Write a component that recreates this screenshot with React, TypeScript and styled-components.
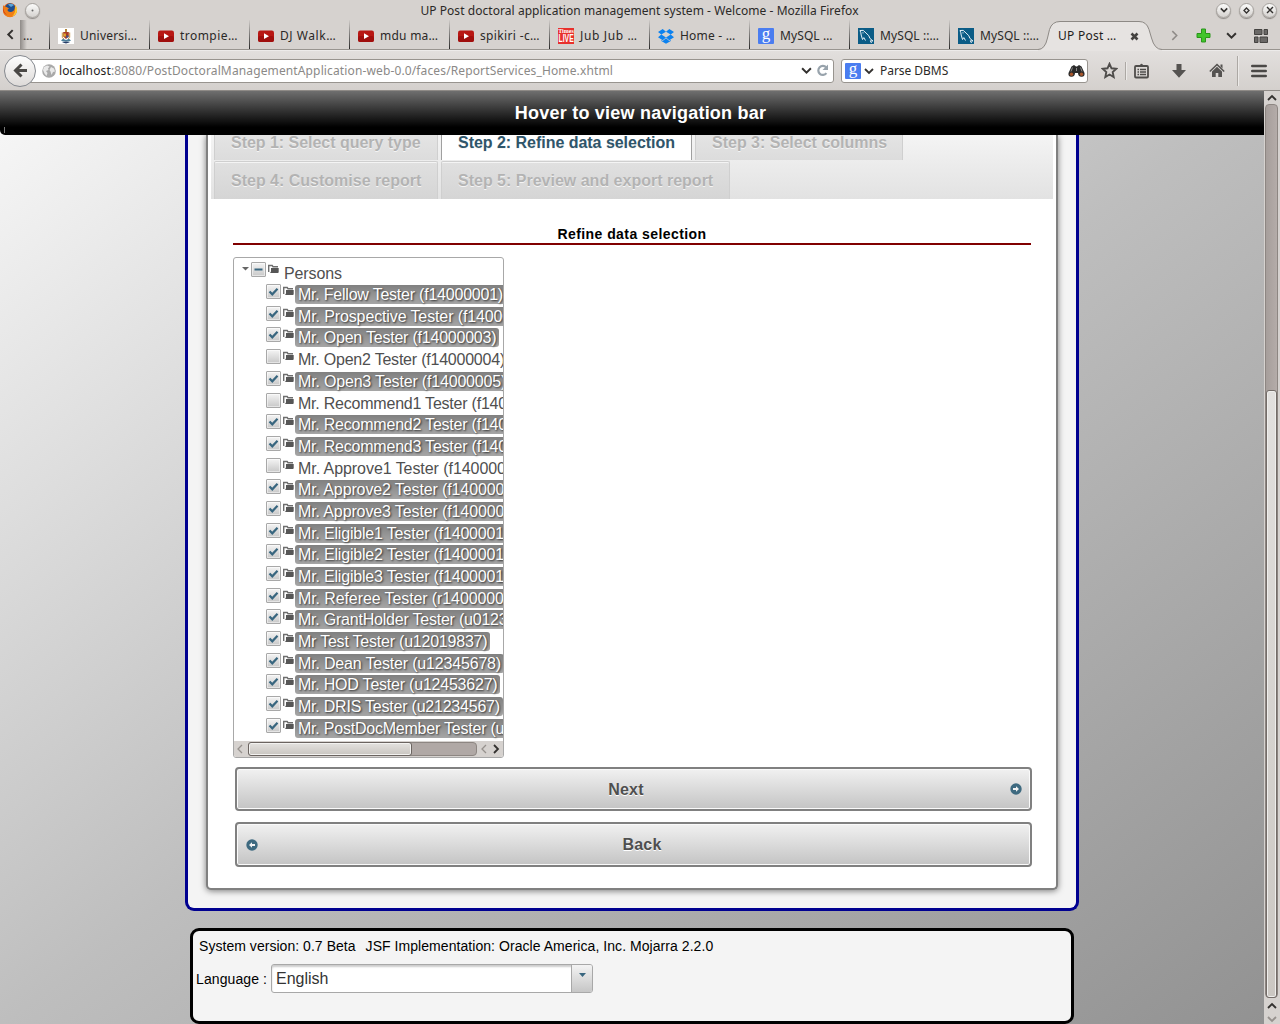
import React from "react";
import styled, { createGlobalStyle, css } from "styled-components";

const ui = `"Noto Sans", "Open Sans", sans-serif`;
const sans = `"Liberation Sans", Arial, sans-serif`;

const Global = createGlobalStyle`
  html, body { margin: 0; padding: 0; }
  body { overflow: hidden; }
  * { box-sizing: border-box; }
  svg { flex: none; }
`;

const Window = styled.div`
  width: 1280px; height: 1024px; overflow: hidden;
  display: flex; flex-direction: column;
  background: #d6d2cf; color: #2b2927; font: 12px/16px ${ui};
`;
const Text = styled.span<{ $ls?: number }>`
  letter-spacing: ${(p) => p.$ls ?? 0}px; white-space: pre;
`;

/* title bar */
const TitleBar = styled.header`
  flex: none; height: 20px; display: flex; align-items: center; justify-content: space-between;
  padding: 0 3px 0 2px;
`;
const TitleSide = styled.div`display: flex; gap: 8px; width: 66px; justify-content: flex-end;`;
const TitleLeft = styled.div`display: flex; gap: 7px; width: 66px; align-items: center;`;
const TitleText = styled(Text)`padding-top: 2px;`;
const Knob = styled.span`
  width: 15px; height: 15px; border-radius: 50%; display: grid; place-items: center;
  background: linear-gradient(#fbfbfa, #d5d2cf); border: 1px solid #a6a29e;
  box-shadow: 0 1px 1px #8d8985;
`;

/* tab strip */
const TabStrip = styled.nav`
  flex: none; height: 30px; display: flex; border-bottom: 1px solid #98948f;
`;
const ScrollTabs = styled.div`
  flex: none; width: 20px; height: 29px; display: grid; place-items: center;
`;
const PartialTab = styled.div`
  flex: none; width: 30px; height: 29px; padding: 8px 0 0 3px; background: linear-gradient(90deg, #8e8a87, #d6d2cf 7px);
  border-right: 1px solid #2f2d2b;
  border-image: linear-gradient(#d6d2cf, #222) 1;
`;
const BrowserTab = styled.div<{ $last?: boolean }>`
  flex: none; width: 100px; height: 29px; display: flex; align-items: center; gap: 6px; padding: 2px 0 0 8px;
  border-right: 1px solid #2f2d2b;
  border-image: linear-gradient(#d6d2cf, #222) 1;
  ${(p) => p.$last && css`width: 91px; border-image: none; border-right: 0;`}
`;
const ActiveTab = styled.div`
  flex: none; width: 124px; height: 30px; position: relative; display: flex; align-items: center;
  padding: 2px 0 0 17px; color: #1f1d1b;
`;
const ActiveShape = styled.svg`position: absolute; left: 0; top: 0; z-index: 0; overflow: visible;`;
const Above = styled.div`position: relative; display: flex; align-items: center; gap: 13px;`;
const TabTools = styled.div`flex: 1; display: flex; align-items: center; padding: 2px 0 0 0; height: 29px;`;
const ToolSlot = styled.span<{ $w: number }>`
  flex: none; width: ${(p) => p.$w}px; display: flex; justify-content: center; align-items: center;
`;

/* toolbar */
const Toolbar = styled.div`
  flex: none; height: 41px; display: flex; align-items: center; border-bottom: 1px solid #8e8a86;
  border-top: 1px solid #edebea;
  background: linear-gradient(#e2dfdd, #d4d0cd);
`;
const BackButton = styled.div`
  flex: none; width: 32px; height: 32px; margin: 0 -17px 0 4px; border-radius: 50%; z-index: 1;
  display: grid; place-items: center; border: 1px solid #85898f;
  background: linear-gradient(#fdfdfd, #dddad8);
`;
const UrlField = styled.div`
  flex: none; width: 815px; height: 24px; border: 1px solid #98948f; border-radius: 3px; background: #fff;
  display: flex; align-items: center; padding: 0 2px 0 18px; color: #8b8987;
  b { font-weight: 400; color: #1e1c1b; }
`;
const Spacer = styled.span`flex: 1;`;
const SearchField = styled.div`
  flex: none; width: 247px; height: 24px; margin-left: 7px; border: 1px solid #98948f; border-radius: 3px;
  background: #fff; display: flex; align-items: center; padding: 0 2px 0 3px; gap: 3px;
`;
const Divider = styled.span<{ $h: number }>`
  flex: none; width: 1px; height: ${(p) => p.$h}px; background: #aca8a4; box-shadow: 1px 0 #eceae8;
`;

/* page */
const Body = styled.div`flex: 1; display: flex; min-height: 0;`;
const Page = styled.main`
  width: 1264px; overflow: hidden; display: flex; flex-direction: column;
  font-family: ${sans}; color: #000;
  background: linear-gradient(to bottom right, #f8f8f8 0%, #bebebe 50%, #929292 100%);
`;
const NavBar = styled.div`
  flex: none; height: 44px; border-radius: 0 0 0 5px;
  background: linear-gradient(#777, #777) 4px 36px / 1px 6px no-repeat, linear-gradient(#6f6f6f, #000 82%);
  color: #fff; font: bold 18px/44px ${sans}; text-align: center; padding-left: 17px;
`;
const Outer = styled.section`
  flex: none; width: 894px; height: 776px; margin-left: 185px; border: 3px solid #000090; border-top: 0;
  border-radius: 0 0 9px 9px; background: #f4f4f4; padding: 0 18px;
`;
const Inner = styled.div`
  height: 755px; width: 852px; background: #fff; border: 2px solid #808080; border-top: 0;
  border-radius: 0 0 5px 5px; box-shadow: 0 1px 6px rgba(0,0,0,.5);
  padding: 0 3px; display: flex; flex-direction: column;
`;
const Steps = styled.div`
  width: 842px; height: 64px; padding-left: 3px; background: linear-gradient(#f4f4f4, #e2e2e2);
  display: flex; flex-wrap: wrap; align-content: flex-start; column-gap: 3px;
`;
const Step = styled.div<{ $w: number; $row: 1 | 2; $active?: boolean }>`
  width: ${(p) => p.$w}px; height: ${(p) => (p.$row === 1 ? 25 : 38)}px;
  padding-left: 16px; white-space: nowrap;
  font: bold 16px/${(p) => (p.$row === 1 ? 16 : 37)}px ${sans};
  color: #b3b3b3; text-shadow: 0 1px 0 #f5f5f5;
  border: 1px solid #cfcfcf; border-bottom: 0;
  ${(p) => p.$row === 1
    ? css`border-top: 0; background: linear-gradient(#e4e4e4, #dcdcdc);`
    : css`background: linear-gradient(#e0e0e0, #d5d5d5); box-shadow: inset 0 1px #f4f4f4; border-radius: 2px 2px 0 0;`}
  ${(p) => p.$active && css`color: #2f556a; background: #fff; border-color: #a0a0a0;`}
`;
const Break = styled.span`flex-basis: 100%; height: 1px;`;
const Content = styled.div`padding: 25px 22px 0; display: flex; flex-direction: column;`;
const Heading = styled.h2`
  margin: 0; height: 21px; width: 798px; border-bottom: 2px solid #800000;
  font: bold 14px/20px ${sans}; text-align: center;
`;
const Tree = styled.div`
  width: 271px; height: 501px; margin-top: 12px; border: 1px solid #a8a8a8; border-radius: 3px;
  display: flex; flex-direction: column; overflow: hidden; color: #4f4f4f;
`;
const TreeRows = styled.div`flex: 1; padding-top: 4.4px; overflow: hidden;`;
const TreeRow = styled.div<{ $root?: boolean }>`
  height: 21.7px; display: flex; align-items: flex-start; padding-left: ${(p) => (p.$root ? 7 : 32)}px;
`;
const Check = styled.span`
  flex: none; width: 15px; height: 15px; border: 1px solid #a8a8a8; border-radius: 1px; margin-right: 2px;
  background: linear-gradient(#f4f4f4, #c8c8c8); display: grid; place-items: center;
  box-shadow: inset 0 0 0 1px rgba(255,255,255,.5);
`;
const Label = styled.span<{ $on?: boolean; $root?: boolean }>`
  flex: none; height: 19px; margin: ${(p) => (p.$root ? "2px 0 0 1px" : "1px 0 0")}; padding: 0 3px; border-radius: 3px;
  font: 16px/20px ${sans}; white-space: nowrap;
  ${(p) => p.$on && css`
    color: #fff; background: linear-gradient(#808080, #a6a6a6); text-shadow: 1px 1px 2px rgba(0,0,0,.7);
  `}
`;
const HScroll = styled.div`
  flex: none; height: 16px; background: #d6d2cf; display: flex; align-items: center; gap: 2px; padding: 0 0 0 1px;
`;
const HTrack = styled.div`
  flex: none; width: 229px; height: 14px; margin-left: 1px; border: 1px solid #8d8682; border-radius: 4px; background: #b0a8a5;
`;
const HThumb = styled.div`
  width: 164px; height: 14px; margin: -1px 0 0 -1px; border: 1px solid #6b6460; border-radius: 3px;
  background: linear-gradient(#e4e2df, #c9c5c0); box-shadow: inset 0 0 0 1px #f3f2f0;
`;
const BigButton = styled.div<{ $h: number; $mt: number }>`
  width: 797px; height: ${(p) => p.$h}px; margin: ${(p) => p.$mt}px 0 0 2px; border: 2px solid #808080; border-radius: 4px;
  background: linear-gradient(#f1f1f1, #c4c4c4); box-shadow: inset 0 0 0 1px #fafafa;
  display: flex; align-items: center; gap: 4px; padding: 0 8px 0 9px; color: #4f4f4f;
  font: bold 16px/20px ${sans}; text-shadow: 0 1px 0 #fff;
`;
const Grow = styled.span`flex: 1; text-align: center; letter-spacing: .2px; padding-top: 1px;`;
const Footer = styled.footer`
  flex: none; width: 884px; height: 96px; margin: 17px 0 0 190px; border: 3px solid #000; border-radius: 9px;
  background: #f4f4f4; font: 14px/16px ${sans};
`;
const FooterLine = styled.div`display: flex; gap: 10px; padding: 7px 0 0 6px; height: 33px;`;
const LangLine = styled.div`display: flex; align-items: center; padding-left: 3px; height: 29px;`;
const Select = styled.div`
  width: 322px; height: 29px; border: 1px solid #a8a8a8; border-radius: 3px; display: flex; background: #fff;
  box-shadow: inset 0 2px 2px #ccc; font: 16px/27px ${sans}; color: #333; padding-left: 4px; overflow: hidden;
`;
const SelectArrow = styled.span`
  width: 21px; border-left: 1px solid #a8a8a8; background: linear-gradient(#f3f3f3, #c6c6c6);
  display: flex; justify-content: center; padding-top: 8px;
`;

/* vertical scroll bar */
const VScroll = styled.aside`
  width: 16px; background: #d6d2cf; display: flex; flex-direction: column; align-items: center;
`;
const VTrack = styled.div`
  width: 13px; height: 894px; margin-right: 1px; border: 1px solid #8d8682; border-radius: 4px;
  background: linear-gradient(90deg, #a69e9b, #b4aca9);
  display: flex; flex-direction: column; justify-content: flex-end;
`;
const VThumb = styled.div`
  height: 608px; margin: 0 0 -1px; border: 1px solid #736c68; border-radius: 3px;
  background: linear-gradient(#e2e0de, #cbc7c2); box-shadow: inset 0 0 0 1px #efeeec;
`;
const ArrowSlot = styled.div<{ $h: number }>`
  height: ${(p) => p.$h}px; display: grid; place-items: center;
`;

const Chevron = ({ dir, c = "#33312f", s = 10, w = 1.8 }: { dir: "u" | "d" | "l" | "r"; c?: string; s?: number; w?: number }) => {
  const d = { u: "M1 7 5 3 9 7", d: "M1 3 5 7 9 3", l: "M7 1 3 5 7 9", r: "M3 1 7 5 3 9" }[dir];
  return <svg width={s} height={s} viewBox="0 0 10 10"><path d={d} fill="none" stroke={c} strokeWidth={w} /></svg>;
};

const Firefox = () => (
  <svg width="16" height="16" viewBox="0 0 16 16">
    <circle cx="8" cy="8" r="7" fill="#e8661b" />
    <circle cx="8.2" cy="6.4" r="5.2" fill="#1f4f8f" />
    <path d="M6 2.5Q9 .8 12 3L9 5Z" fill="#5aa4d8" />
    <path d="M1 3Q2 5 4.5 5L7 6.5 5.3 8Q6.5 11 10 9.7 13 8.5 12.8 5 15 7 14.5 10 13 15 8 15.2 1 14.5.9 8Z" fill="#f07d16" />
    <path d="M13 3Q16 6.5 14.6 10.5 13 14 10 14.5 13.5 11 13.2 7Z" fill="#fcc92c" />
    <path d="M1.5 4Q.8 10 5 13 2 12 1 8Z" fill="#c5301a" />
  </svg>
);
const YouTube = () => (
  <svg width="16" height="16" viewBox="0 0 16 16">
    <rect y="2.5" width="16" height="11.5" rx="2.2" fill="#b81713" />
    <rect y="8" width="16" height="6" rx="2.2" fill="#a00f0d" />
    <path d="M6 5.3 11 8.2 6 11Z" fill="#fff" />
  </svg>
);
const Crest = () => (
  <svg width="16" height="16" viewBox="0 0 16 16">
    <rect width="16" height="16" fill="#fff" />
    <path d="M7 1h2v3H7z" fill="#b3863a" /><path d="M5.2 4h5.6v4.5L8 11 5.2 8.500Z" fill="#a63a26" />
    <path d="M5.500 5.500h2.400v3H5.500z" fill="#e0a92e" /><path d="M8.200 7.500h2.300v2H8.200z" fill="#33548d" />
    <path d="M4.300 4.500v5L6 11M11.700 4.500v5L10 11" fill="none" stroke="#c9963f" />
    <path d="M3 12.500 5 10.800 8 12 11 10.800 13 12.500 11 13.500H5Z" fill="#4d7f9a" />
    <path d="M4 14.200 8 13.500 12 14.200 8 15.500Z" fill="#273e68" />
  </svg>
);
const TimesIcon = styled.span`
  flex: none; width: 16px; height: 16px; background: #e8302c; color: #fff; display: flex; flex-direction: column;
  align-items: center; overflow: hidden;
  i { font: bold 6px/6px "Liberation Serif", serif; }
  b { font: bold 10px/10px "Liberation Sans", sans-serif; transform: scaleX(.68); }
`;
const Dropbox = () => (
  <svg width="16" height="16" viewBox="0 0 16 16" fill="#0d82ef">
    <path d="M4.700 1 8 3.700 3.300 6.600 0 4ZM11.300 1 16 4 12.700 6.600 8 3.700ZM0 9.200 3.300 6.600 8 9.500 4.700 12.200ZM16 9.200 12.700 6.600 8 9.500 11.300 12.200ZM8 10.200 11.300 12.900 12.800 12V13L8 15.800 3.300 13V12L4.700 12.900Z" />
  </svg>
);
const GoogleIcon = styled.span`
  flex: none; width: 16px; height: 16px; background: #4a7df0; color: #fff; border-radius: 1px;
  font: 17px/11px "Liberation Serif", serif; text-align: center; overflow: hidden;
`;
const MySql = () => (
  <svg width="16" height="16" viewBox="0 0 16 16">
    <rect width="16" height="16" fill="#0b5c86" />
    <path d="M2 2.500Q5.500 1 8 5 11.500 7.500 12 10.500L15 13 12.300 12.800 13.500 15M2 2.500Q3 4.500 3.200 7L4.500 11.500 5.800 9.600 7.500 12.500" fill="none" stroke="#e7f1f6" strokeWidth="1" />
    <circle cx="5" cy="4.800" r=".6" fill="#fff" />
  </svg>
);
const Globe = () => (
  <svg width="14" height="14" viewBox="0 0 14 14">
    <circle cx="7" cy="7" r="6.800" fill="#a9a9a9" />
    <path d="M2 3 5 1.500 7.500 2.500 6 4.500 6.500 6 4 7 5.500 9 4.500 12 2.500 9.500 1 6ZM9 3 12 4.500 13 7.500 11 8 9.500 11 8.500 7.500 7.500 6Z" fill="#e9e9e9" />
  </svg>
);
const Binoculars = () => (
  <svg width="17" height="14" viewBox="0 0 17 14">
    <path d="M3.500 2.500 6 1 8 2.500H9L11 1 13.500 2.500 16.500 9Q17 13 13.500 12.800 10 12.500 10 9H7Q7 12.500 3.500 12.800 0 13 .5 9Z" fill="#2a2a2a" />
    <path d="M4.500 3.500 3 7.500M12.500 3.500 14 7.500M8.500 4v3" stroke="#8a8a8a" />
    <circle cx="3.500" cy="10.200" r="1.700" fill="#a8562b" /><circle cx="13.500" cy="10.200" r="1.700" fill="#a8562b" />
  </svg>
);
const Reload = () => (
  <svg width="13" height="13" viewBox="0 0 13 13">
    <path d="M10.200 3.500A4.500 4.500 0 1 0 10.400 9.200" fill="none" stroke="#98a3ac" strokeWidth="2.200" />
    <path d="M12 .5V6H6.500Z" fill="#98a3ac" />
  </svg>
);
const Star = () => (
  <svg width="17" height="17" viewBox="0 0 17 17">
    <path d="M8.500 1.800 10.500 6.300 15.300 6.800 11.700 10.100 12.700 15 8.500 12.500 4.300 15 5.300 10.100 1.700 6.800 6.500 6.300Z" fill="none" stroke="#4f4d4b" strokeWidth="1.900" />
  </svg>
);
const Clipboard = () => (
  <svg width="15" height="16" viewBox="0 0 15 16">
    <rect x="1" y="3" width="13" height="11.500" rx="1" fill="none" stroke="#4f4d4b" strokeWidth="1.800" />
    <path d="M4 3.500V2H6Q7.500-.5 9 2H11V3.500Z" fill="#4f4d4b" />
    <path d="M3.500 6.500H5M6 6.500h6M3.500 9H5M6 9h6M3.500 11.500H5M6 11.500h6" stroke="#4f4d4b" strokeWidth="1.400" />
  </svg>
);
const Download = () => (
  <svg width="14" height="14" viewBox="0 0 14 14"><path d="M4.500 0h5v6H14L7 13.800 0 6h4.500Z" fill="#555351" /></svg>
);
const Home = () => (
  <svg width="16" height="15" viewBox="0 0 16 15">
    <path d="M.8 8.500 8 1.500 15.200 8.500" fill="none" stroke="#555351" strokeWidth="1.600" />
    <path d="M3 8.500 8 3.800 13 8.500V14H9.300V10H6.700V14H3ZM11.500 1.500h2v4l-2-2Z" fill="#555351" />
  </svg>
);
const Menu = () => (
  <svg width="16" height="14" viewBox="0 0 16 14"><path d="M1.300 2H14.700M1.300 7H14.700M1.300 12H14.700" stroke="#4a4846" strokeWidth="2.600" strokeLinecap="round" /></svg>
);
const Panorama = () => (
  <svg width="14" height="14" viewBox="0 0 14 14" fill="#6a6866" stroke="#454341">
    <path d="M.5.5h7.500v5H.5zM10 .5h3.500v5H10zM.5 8h3.500v5.500H.5zM6 8h7.500v5.500H6z" />
  </svg>
);
const Folder = () => (
  <svg width="12" height="15" viewBox="0 0 12 15">
    <path d="M.7 10V3.500H4.200L5 4.700H10" fill="none" stroke="#6e6e6e" strokeWidth="1.400" />
    <path d="M3 6H10.700V10Q10.700 11 9.700 11H1.700Q3 10.500 3 9Z" fill="#565656" />
  </svg>
);
const Tick = () => (
  <svg width="11" height="11" viewBox="0 0 11 11"><path d="M1.500 5.500 4.300 8.300 9.500 2.700" fill="none" stroke="#38667f" strokeWidth="2.200" /></svg>
);
const CircleArrow = ({ left }: { left?: boolean }) => (
  <svg width="12" height="12" viewBox="0 0 12 12">
    <circle cx="6" cy="6" r="5.700" fill="#3e6a80" />
    <path d={left ? "M9 5H6V3.200L3 6 6 8.800V7H9Z" : "M3 5H6V3.200L9 6 6 8.800V7H3Z"} fill="#f3f3f3" />
  </svg>
);

type Fav = "crest" | "yt" | "times" | "dropbox" | "google" | "mysql";
const favs: Record<Fav, React.ReactElement> = {
  crest: <Crest />, yt: <YouTube />, times: <TimesIcon><i>Times</i><b>LIVE</b></TimesIcon>,
  dropbox: <Dropbox />, google: <GoogleIcon>g</GoogleIcon>, mysql: <MySql />,
};
const tabs: [Fav, string, number][] = [
  ["crest", "Universi…", 0.2], ["yt", "trompie…", 0.45], ["yt", "DJ Walk…", 0.55], ["yt", "mdu ma…", 0.25],
  ["yt", "spikiri -c…", 0.35], ["times", "Jub Jub …", 0.65], ["dropbox", "Home - …", 0.2],
  ["google", "MySQL …", 0.1], ["mysql", "MySQL ::…", 0.1], ["mysql", "MySQL ::…", 0.1],
];

const people: [string, boolean, number?][] = [
  ["Mr. Fellow Tester (f14000001)", true], ["Mr. Prospective Tester (f14000002)", true, -0.12],
  ["Mr. Open Tester (f14000003)", true], ["Mr. Open2 Tester (f14000004)", false],
  ["Mr. Open3 Tester (f14000005)", true, -0.18], ["Mr. Recommend1 Tester (f14000006)", false],
  ["Mr. Recommend2 Tester (f14000007)", true], ["Mr. Recommend3 Tester (f14000008)", true],
  ["Mr. Approve1 Tester (f14000009)", false, -0.06], ["Mr. Approve2 Tester (f14000010)", true, -0.12],
  ["Mr. Approve3 Tester (f14000011)", true, -0.12], ["Mr. Eligible1 Tester (f14000012)", true, -0.18],
  ["Mr. Eligible2 Tester (f14000013)", true, -0.18], ["Mr. Eligible3 Tester (f14000014)", true, -0.18],
  ["Mr. Referee Tester (r14000001)", true, -0.1], ["Mr. GrantHolder Tester (u01234567)", true],
  ["Mr Test Tester (u12019837)", true], ["Mr. Dean Tester (u12345678)", true, -0.18],
  ["Mr. HOD Tester (u12453627)", true], ["Mr. DRIS Tester (u21234567)", true],
  ["Mr. PostDocMember Tester (u12345679)", true],
];

const tabOutline = "M-3 29.500Q4 29.500 6.500 18L8.500 9.500Q11 1.500 19 1.500H98Q105.500 1.500 108 9.500L110.500 18Q113.500 29.500 121 29.500";

export default function App() {
  return (
    <Window>
      <Global />
      <TitleBar>
        <TitleLeft>
          <Firefox />
          <Knob><svg width="3" height="3"><circle cx="1.500" cy="1.500" r="1" fill="#666" /></svg></Knob>
        </TitleLeft>
        <TitleText $ls={0.055}>UP Post doctoral application management system - Welcome - Mozilla Firefox</TitleText>
        <TitleSide>
          <Knob><Chevron dir="d" s={8} w={2} /></Knob>
          <Knob><svg width="7" height="7"><path d="M3.500 1 6 3.500 3.500 6 1 3.500Z" fill="none" stroke="#33312f" strokeWidth="1.300" /></svg></Knob>
          <Knob><svg width="8" height="8"><path d="M1 1 7 7M7 1 1 7" stroke="#33312f" strokeWidth="1.400" /></svg></Knob>
        </TitleSide>
      </TitleBar>
      <TabStrip>
        <ScrollTabs><Chevron dir="l" s={11} /></ScrollTabs>
        <PartialTab><Text>…</Text></PartialTab>
        {tabs.map(([f, t, ls], i) => (
          <BrowserTab key={i} $last={i === tabs.length - 1}>{favs[f]}<Text $ls={ls}>{t}</Text></BrowserTab>
        ))}
        <ActiveTab>
          <ActiveShape width="124" height="31">
            <path d={tabOutline + "V31H-3Z"} fill="#e6e3e1" />
            <path d={tabOutline} fill="none" stroke="#8d8985" />
          </ActiveShape>
          <Above>
            <Text $ls={0.25}>UP Post …</Text>
            <svg width="9" height="9"><path d="M1.500 1.500 7.500 7.500M7.500 1.500 1.500 7.500" stroke="#444240" strokeWidth="2.600" /></svg>
          </Above>
        </ActiveTab>
        <TabTools>
          <ToolSlot $w={18}><Chevron dir="r" c="#8f8b88" s={11} w={1.400} /></ToolSlot>
          <ToolSlot $w={40}>
            <svg width="15" height="15"><path d="M5.500 1h4v4.500H14v4H9.500V14h-4V9.500H1v-4h4.500Z" fill="#41c52c" stroke="#2a961b" /></svg>
          </ToolSlot>
          <ToolSlot $w={17}><Chevron dir="d" s={11} /></ToolSlot>
          <ToolSlot $w={42}><Panorama /></ToolSlot>
        </TabTools>
      </TabStrip>
      <Toolbar>
        <BackButton>
          <svg width="15" height="15"><path d="M8.500 1.500 2.500 7.500 8.500 13.500M3 7.500H14" fill="none" stroke="#4a4846" strokeWidth="3" /></svg>
        </BackButton>
        <UrlField>
          <ToolSlot $w={21}><Globe /></ToolSlot>
          <Text $ls={0.13}><b>localhost</b>:8080/PostDoctoralManagementApplication-web-0.0/faces/ReportServices_Home.xhtml</Text>
          <Spacer />
          <ToolSlot $w={16}><Chevron dir="d" s={11} /></ToolSlot>
          <ToolSlot $w={17}><Reload /></ToolSlot>
        </UrlField>
        <SearchField>
          <GoogleIcon>g</GoogleIcon>
          <Chevron dir="d" s={10} />
          <Text $ls={-0.05}> Parse DBMS</Text>
          <Spacer />
          <Binoculars />
        </SearchField>
        <ToolSlot $w={13} />
        <Star />
        <Spacer />
        <Divider $h={18} />
        <ToolSlot $w={31}><Clipboard /></ToolSlot>
        <ToolSlot $w={44}><Download /></ToolSlot>
        <ToolSlot $w={32}><Home /></ToolSlot>
        <ToolSlot $w={4} />
        <Divider $h={30} />
        <ToolSlot $w={42}><Menu /></ToolSlot>
      </Toolbar>
      <Body>
        <Page>
          <NavBar><Text $ls={0.23}>Hover to view navigation bar</Text></NavBar>
          <Outer>
            <Inner>
              <Steps>
                <Step $w={224} $row={1}><Text $ls={-0.03}>Step 1: Select query type</Text></Step>
                <Step $w={251} $row={1} $active><Text $ls={-0.03}>Step 2: Refine data selection</Text></Step>
                <Step $w={208} $row={1}><Text>Step 3: Select columns</Text></Step>
                <Break />
                <Step $w={224} $row={2}><Text>Step 4: Customise report</Text></Step>
                <Step $w={289} $row={2}><Text>Step 5: Preview and export report</Text></Step>
              </Steps>
              <Content>
                <Heading><Text $ls={0.43}>Refine data selection</Text></Heading>
                <Tree>
                  <TreeRows>
                    <TreeRow $root>
                      <ToolSlot $w={10}><svg width="8" height="14"><path d="M0 5H7L3.500 8.500Z" fill="#666" /></svg></ToolSlot>
                      <Check><svg width="9" height="3"><path d="M.5 1.500H8.500" stroke="#38667f" strokeWidth="1.800" /></svg></Check>
                      <Folder /><Label $root><Text $ls={-0.1}>Persons</Text></Label>
                    </TreeRow>
                    {people.map(([name, on, ls = -0.22]) => (
                      <TreeRow key={name}>
                        <Check>{on && <Tick />}</Check><Folder /><Label $on={on}><Text $ls={ls}>{name}</Text></Label>
                      </TreeRow>
                    ))}
                  </TreeRows>
                  <HScroll>
                    <Chevron dir="l" c="#96918d" s={10} w={1.300} />
                    <HTrack><HThumb /></HTrack>
                    <Chevron dir="l" c="#96918d" s={10} w={1.300} />
                    <Chevron dir="r" s={10} w={1.800} />
                  </HScroll>
                </Tree>
                <BigButton $h={44} $mt={9}><Grow>Next</Grow><CircleArrow /></BigButton>
                <BigButton $h={45} $mt={11}><CircleArrow left /><Grow>Back</Grow></BigButton>
              </Content>
            </Inner>
          </Outer>
          <Footer>
            <FooterLine>
              <Text $ls={0.04}>System version: 0.7 Beta</Text>
              <Text $ls={0.055}>JSF Implementation: Oracle America, Inc. Mojarra 2.2.0</Text>
            </FooterLine>
            <LangLine>
              <ToolSlot $w={75}><Text $ls={0.1}>Language :</Text><Spacer /></ToolSlot>
              <Select>
                <Text>English</Text><Spacer />
                <SelectArrow><svg width="7" height="4"><path d="M0 0H7L3.500 4Z" fill="#38667f" /></svg></SelectArrow>
              </Select>
            </LangLine>
          </Footer>
        </Page>
        <VScroll>
          <ArrowSlot $h={13}><Chevron dir="u" s={10} /></ArrowSlot>
          <VTrack><VThumb /></VTrack>
          <ArrowSlot $h={15}><Chevron dir="u" s={10} /></ArrowSlot>
          <ArrowSlot $h={11}><Chevron dir="d" s={10} c="#96918d" /></ArrowSlot>
        </VScroll>
      </Body>
    </Window>
  );
}
